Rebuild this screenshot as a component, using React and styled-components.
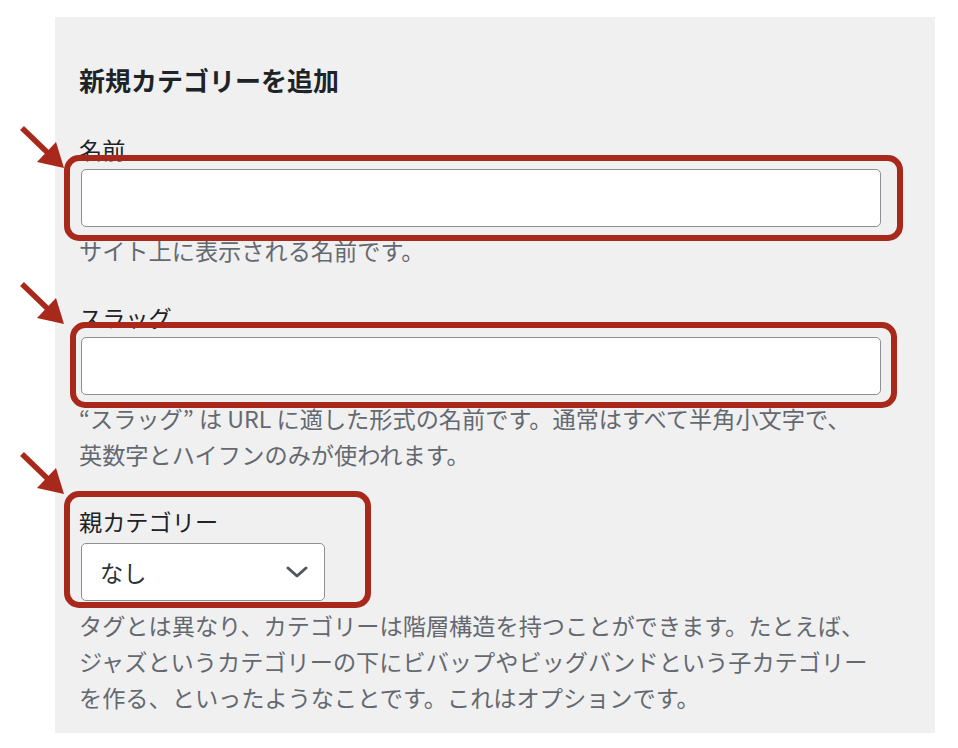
import React from "react";
import styled, { createGlobalStyle } from "styled-components";

const Global = createGlobalStyle`
  html, body { margin: 0; padding: 0; background: #ffffff; }
  body { font-family: "Noto Sans CJK JP", "Noto Sans", sans-serif; }
  * { box-sizing: border-box; }
`;

const Page = styled.div`
  position: relative;
  width: 958px;
  height: 748px;
  padding: 17px 0 0 55px;
  overflow: hidden;
`;

const Panel = styled.section`
  width: 880px;
  height: 716px;
  background: #f0f0f1;
  padding: 45px 24px 18px 24px;
  display: flex;
  flex-direction: column;
`;

const Heading = styled.h2`
  margin: 0 0 33px 0;
  font-size: 26px;
  line-height: 36px;
  font-weight: 700;
  color: #1d2327;
`;

const Field = styled.div`
  position: relative;
  display: flex;
  flex-direction: column;
  align-items: flex-start;
  margin-bottom: ${(p) => p.$gap ?? 31}px;
`;

const Label = styled.label`
  font-size: 23.2px;
  line-height: 36px;
  color: #1d2327;
  margin-bottom: ${(p) => p.$gap ?? 2}px;
`;

const TextInput = styled.input`
  width: 800px;
  height: 58px;
  margin: 0 0 0 2px;
  padding: 0 16px;
  border: 1px solid #8c8f94;
  border-radius: 5px;
  background: #ffffff;
  font: inherit;
  font-size: 23px;
  outline: none;
`;

const SelectBox = styled.div`
  display: flex;
  align-items: center;
  justify-content: space-between;
  width: 244px;
  height: 58px;
  margin-left: 2px;
  padding: 0 16px 0 18px;
  border: 1px solid #8c8f94;
  border-radius: 5px;
  background: #ffffff;
  font-size: 23.2px;
  color: #2c3338;
`;

const Description = styled.p`
  margin: ${(p) => p.$top ?? 5}px 0 0 0;
  font-size: 23.2px;
  line-height: 36px;
  color: #646970;
  white-space: nowrap;
`;

const Highlight = styled.div`
  position: absolute;
  left: ${(p) => p.$left}px;
  top: ${(p) => p.$top}px;
  width: ${(p) => p.$w}px;
  height: ${(p) => p.$h}px;
  border: 6px solid #a8291b;
  border-radius: 15px;
  pointer-events: none;
`;

const ArrowMark = styled.svg`
  position: absolute;
  left: 19px;
  top: ${(p) => p.$top}px;
  width: 50px;
  height: 50px;
  overflow: visible;
`;

const Arrow = ({ top }) => (
  <ArrowMark $top={top} viewBox="0 0 50 50">
    <line x1="3" y1="3" x2="30" y2="29" stroke="#a8291b" strokeWidth="5.5" strokeLinecap="butt" />
    <polygon points="45,43 18,37 37,17" fill="#a8291b" />
  </ArrowMark>
);

const Chevron = () => (
  <svg width="22" height="12" viewBox="0 0 22 12">
    <polyline points="2,2 11,10 20,2" fill="none" stroke="#50575e" strokeWidth="3" strokeLinecap="round" strokeLinejoin="round" />
  </svg>
);

export default function App() {
  return (
    <>
      <Global />
      <Page>
        <Panel>
          <Heading>新規カテゴリーを追加</Heading>

          <Field>
            <Label>名前</Label>
            <TextInput type="text" />
            <Description>サイト上に表示される名前です。</Description>
            <Highlight $left={-15} $top={24} $w={839} $h={86} />
          </Field>

          <Field>
            <Label>スラッグ</Label>
            <TextInput type="text" />
            <Description>
              “スラッグ” は URL に適した形式の名前です。通常はすべて半角小文字で、
              <br />
              英数字とハイフンのみが使われます。
            </Description>
            <Highlight $left={-9} $top={23} $w={827} $h={86} />
          </Field>

          <Field $gap={0}>
            <Label $gap={4}>親カテゴリー</Label>
            <SelectBox>
              <span>なし</span>
              <Chevron />
            </SelectBox>
            <Description $top={6}>
              タグとは異なり、カテゴリーは階層構造を持つことができます。たとえば、
              <br />
              ジャズというカテゴリーの下にビバップやビッグバンドという子カテゴリー
              <br />
              を作る、といったようなことです。これはオプションです。
            </Description>
            <Highlight $left={-15} $top={-12} $w={307} $h={117} />
          </Field>
        </Panel>
        <Arrow top={125} />
        <Arrow top={281} />
        <Arrow top={451} />
      </Page>
    </>
  );
}
